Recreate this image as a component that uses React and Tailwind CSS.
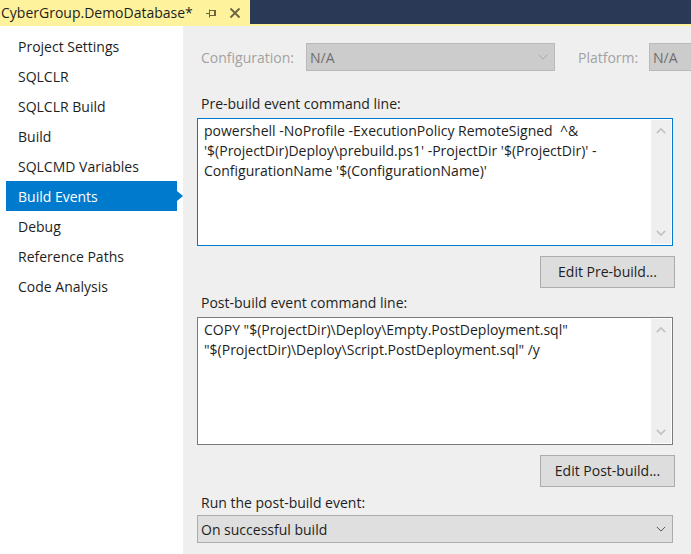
const FONT = "font-['Open_Sans',sans-serif]";

function Chevron({ dir = "down", color = "#6b6b6b", size = 10, width = 1.2 }) {
  return (
    <svg width={size} height={size} viewBox="0 0 12 12" fill="none" stroke={color} strokeWidth={width}>
      <path d={dir === "down" ? "M1 3.5 L6 8.5 L11 3.5" : "M1 8.5 L6 3.5 L11 8.5"} />
    </svg>
  );
}

function Combo({ value, disabled, className = "" }) {
  return (
    <div
      className={`flex h-7 shrink-0 items-center justify-between border pr-1 pl-0.75 ${
        disabled ? "border-[#b9b9b9] bg-[#cccccc] text-[#6f6f6f]" : "border-[#acacac] bg-[#dfdfdf] text-[#1e1e1e]"
      } ${className}`}
    >
      <span className="pt-0.5">{value}</span>
      <span className="pr-0.5">
        <Chevron color={disabled ? "#a8a8a8" : "#555555"} />
      </span>
    </div>
  );
}

function EventBox({ label, lines, active, button }) {
  return (
    <div className="flex w-[478px] flex-col">
      <div className="h-5.5 pl-1 leading-4 text-[#1e1e1e]">{label}</div>
      <div className={`flex h-32 w-[476px] border bg-white py-px pr-px ${active ? "border-[#007acc]" : "border-[#7a7a7a]"}`}>
        <div className="flex-1 px-1.5 py-px leading-5 whitespace-nowrap text-[#1e1e1e]">
          {lines.map((l) => (
            <div key={l} className="whitespace-pre">{l}</div>
          ))}
        </div>
        <div className="flex w-5 flex-col items-center justify-between bg-[#efefef] py-1.5">
          <Chevron dir="up" color="#c2c2c2" width={2} />
          <Chevron dir="down" color="#c2c2c2" width={2} />
        </div>
      </div>
      <div className="mt-2.5 flex justify-end">
        <div className="flex h-8 w-[135px] items-center justify-center border border-[#acacac] bg-[#dddddd] text-[#1e1e1e]">
          {button}
        </div>
      </div>
    </div>
  );
}

const NAV = [
  "Project Settings",
  "SQLCLR",
  "SQLCLR Build",
  "Build",
  "SQLCMD Variables",
  "Build Events",
  "Debug",
  "Reference Paths",
  "Code Analysis",
];

export default function App() {
  return (
    <div className={`flex h-screen w-screen flex-col overflow-hidden bg-white text-sm ${FONT}`}>
      <div className="flex h-6.5 shrink-0 border-b-2 border-[#fff29d] bg-[#2a3a56]">
        <div className="flex h-6.5 w-[250px] items-center bg-[#fff29d] pl-px text-[#1e1e1e]">
          <span>CyberGroup.DemoDatabase*</span>
          <svg className="ml-3" width="12" height="12" viewBox="0 0 12 12" fill="none" stroke="#6b6440" strokeWidth="1">
            <path d="M1 6.5 H4.5 M4.5 2.5 V10.5 M4.5 3.5 H10.5 M4.5 8.5 H10.5 M10.5 3 V9 M9.5 3.5 V8.5" />
          </svg>
          <svg className="ml-3" width="12" height="12" viewBox="0 0 12 12" fill="none" stroke="#6b6440" strokeWidth="1.8">
            <path d="M1.5 1.5 L10.5 10.5 M10.5 1.5 L1.5 10.5" />
          </svg>
        </div>
      </div>
      <div className="flex min-h-0 flex-1">
        <div className="flex w-[183px] shrink-0 flex-col pt-1.25 pl-1.5">
          {NAV.map((n) =>
            n === "Build Events" ? (
              <div key={n} className="relative flex h-7.5 w-[171px] items-center bg-[#007acc] pt-0.5 pl-3 text-white">
                {n}
                <div className="absolute top-2.5 -right-1.5 h-0 w-0 border-y-[5px] border-l-[6px] border-y-transparent border-l-[#007acc]" />
              </div>
            ) : (
              <div key={n} className="flex h-7.5 items-center pt-0.5 pl-3 text-[#1e1e1e]">{n}</div>
            )
          )}
        </div>
        <div className="flex min-w-0 flex-1 flex-col overflow-hidden bg-[#efefef] pl-3.5">
          <div className="mt-4 flex items-center pt-px">
            <span className="w-[109px] shrink-0 pt-0.5 pl-1 text-[#a2a2a2]">Configuration:</span>
            <Combo value="N/A" disabled className="w-[249px]" />
            <span className="w-[94px] shrink-0 pt-0.5 pl-5.75 text-[#a2a2a2]">Platform:</span>
            <Combo value="N/A" disabled className="w-[100px]" />
          </div>
          <div className="mt-6 flex flex-col gap-1.75 pt-px">
            <EventBox
              active
              label="Pre-build event command line:"
              lines={[
                "powershell -NoProfile -ExecutionPolicy RemoteSigned  ^&",
                "'$(ProjectDir)Deploy\\prebuild.ps1' -ProjectDir '$(ProjectDir)' -",
                "ConfigurationName '$(ConfigurationName)'",
              ]}
              button="Edit Pre-build..."
            />
            <EventBox
              label="Post-build event command line:"
              lines={[
                'COPY "$(ProjectDir)\\Deploy\\Empty.PostDeployment.sql"',
                '"$(ProjectDir)\\Deploy\\Script.PostDeployment.sql" /y',
              ]}
              button="Edit Post-build..."
            />
          </div>
          <div className="mt-1.5 h-5.5 pl-1 text-[#1e1e1e]">Run the post-build event:</div>
          <Combo value="On successful build" className="w-[476px]" />
        </div>
      </div>
    </div>
  );
}
